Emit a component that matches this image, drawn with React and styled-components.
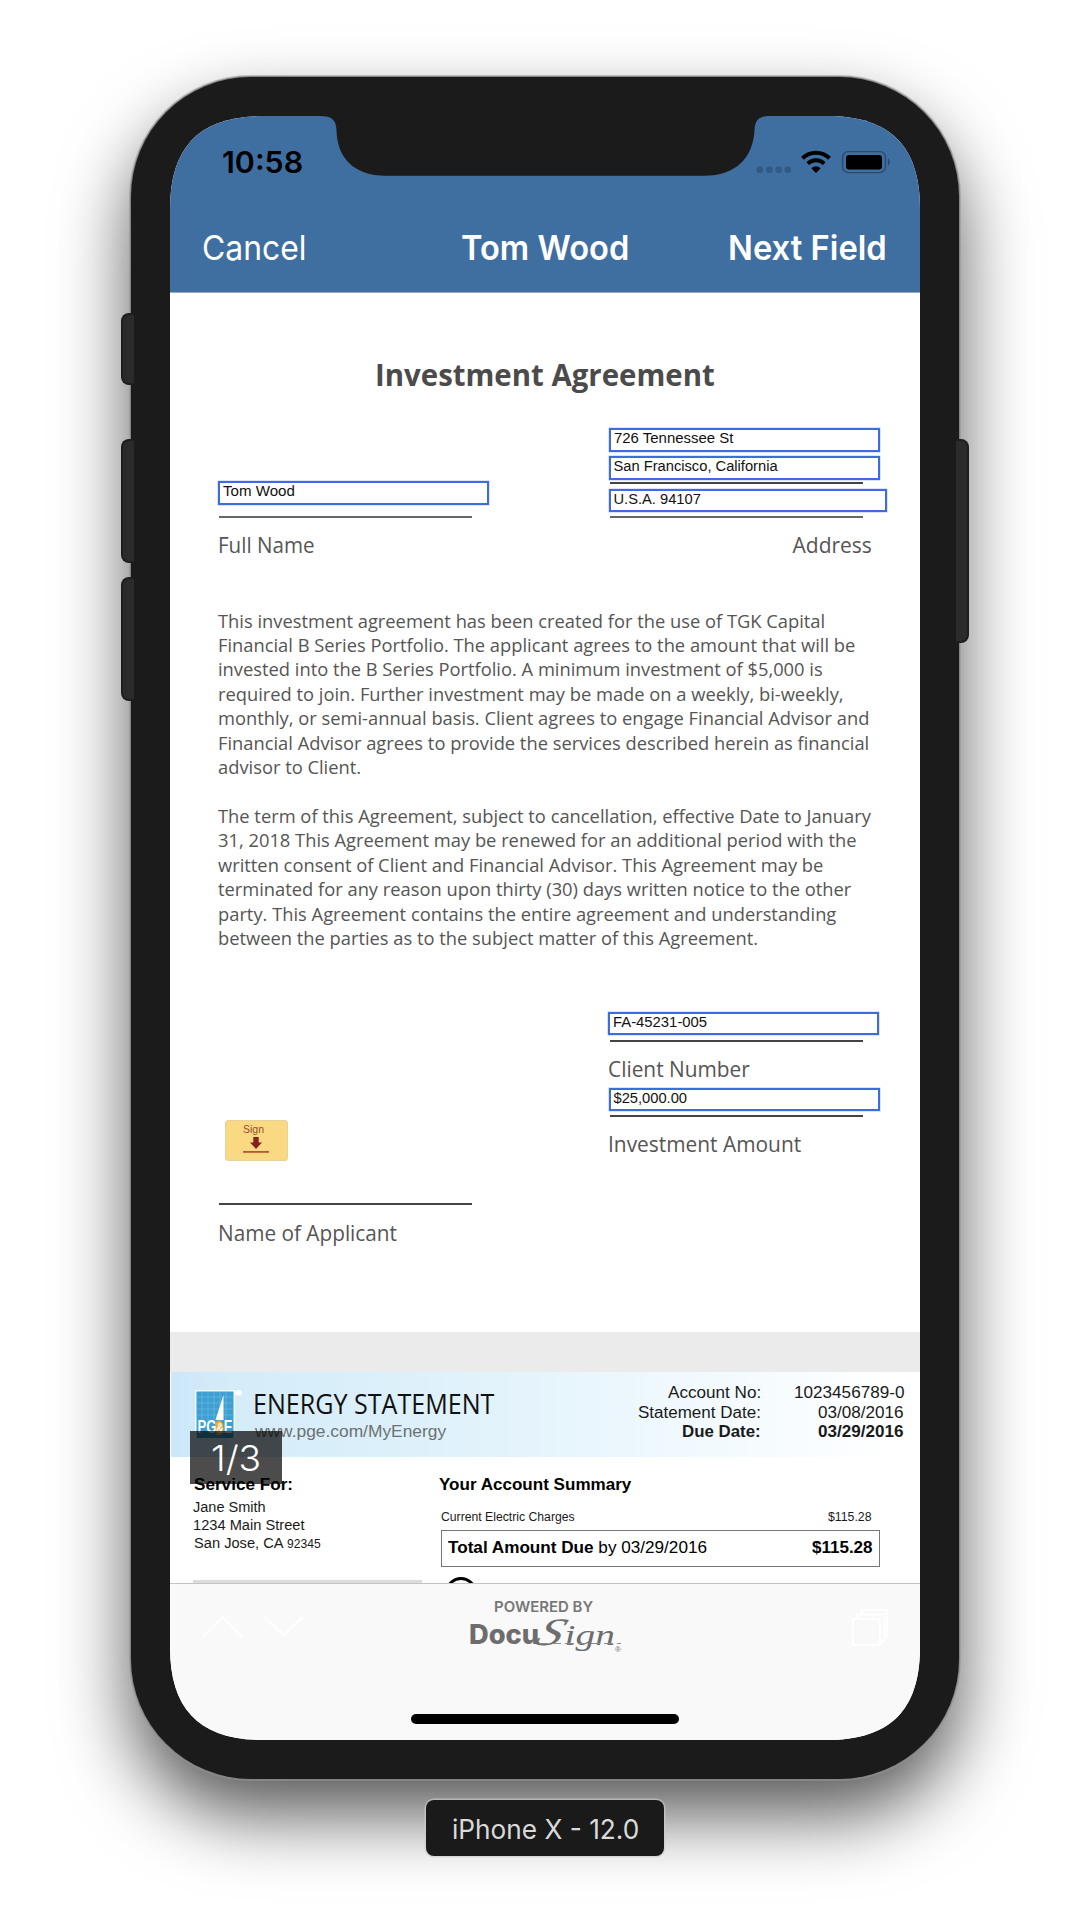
import React, { useLayoutEffect, useRef, useState } from "react";
import styled, { createGlobalStyle } from "styled-components";

const GlobalStyle = createGlobalStyle`
  *, *::before, *::after { box-sizing: border-box; }
  html, body { margin: 0; background: #fff; }
  body { overflow: hidden; }
`;

const ui = `Inter, Roboto, sans-serif`;
const doc = `"Open Sans", "Noto Sans", sans-serif`;
const arial = `"Liberation Sans", Arial, sans-serif`;

/* ---------- text set to a printed width, as in a PDF text layer ---------- */

const RunBox = styled.span`
  display: block;
  flex: none;
  width: ${(p) => p.$w}px;
  white-space: nowrap;
`;

const RunInner = styled.span`
  display: inline-block;
  transform-origin: 0 50%;
`;

function Run({ w, children }) {
  const ref = useRef(null);
  const [scale, setScale] = useState(1);
  useLayoutEffect(() => {
    setScale(w / ref.current.offsetWidth);
  }, [w]);
  return (
    <RunBox $w={w}>
      <RunInner ref={ref} style={{ transform: `scaleX(${scale})` }}>
        {children}
      </RunInner>
    </RunBox>
  );
}

/* ---------- device ---------- */

const Stage = styled.main`
  width: 1090px;
  height: 1928px;
  padding-top: 77px;
  display: flex;
  flex-direction: column;
  align-items: center;
  gap: 21px;
  overflow: hidden;
`;

const Phone = styled.div`
  position: relative;
  width: 828px;
  height: 1702px;
  padding: 39px;
  border-radius: 120px;
  background: #1b1b1b;
  box-shadow: 0 0 0 1px #858585, 0 0 0 2px rgba(150, 150, 150, 0.55),
    0 36px 72px rgba(0, 0, 0, 0.66);
`;

const SideKey = styled.i`
  position: absolute;
  top: ${(p) => p.$top}px;
  ${(p) => p.$side}: -10px;
  width: 13px;
  height: ${(p) => p.$h}px;
  background: #2b2b2b;
  border: 2px solid #1e1e1e;
  border-${(p) => (p.$side === "left" ? "right" : "left")}: 0;
  border-radius: ${(p) => (p.$side === "left" ? "8px 0 0 8px" : "0 8px 8px 0")};
`;

const Screen = styled.div`
  position: relative;
  width: 750px;
  height: 1624px;
  display: flex;
  flex-direction: column;
  background: #fff;
  clip-path: path(
    "M0 93C0 30 30 0 93 0H657C720 0 750 30 750 93V1531C750 1594 720 1624 657 1624H93C30 1624 0 1594 0 1531Z"
  );
`;

const Notch = styled.svg`
  position: absolute;
  top: 0;
  left: 150px;
`;

const Caption = styled.div`
  position: relative;
  width: 238px;
  height: 56px;
  display: flex;
  justify-content: center;
  border-radius: 8px;
  background: #1a1a1a;
  box-shadow: 0 0 0 1.5px rgba(205, 205, 205, 0.65);
  color: #dadada;
  font: 400 26.5px/59px ${ui};
`;

/* ---------- bars ---------- */

const StatusBar = styled.div`
  height: 88px;
  flex: none;
  padding: 0 30px 0 52px;
  display: flex;
  align-items: flex-start;
  justify-content: space-between;
  background: #3f6ea0;
  color: #000;
  font: 600 30px/36px ${ui};
`;

const Clock = styled.div`
  margin-top: 28px;
`;

const Indicators = styled.svg`
  margin-top: 32px;
`;

const NavBar = styled.nav`
  height: 89px;
  flex: none;
  display: flex;
  align-items: flex-start;
  padding: 24px 33px 0 32px;
  background: #3f6ea0;
  border-bottom: 1px solid #9aaabb;
  color: #fff;
  font: 400 34px/40px ${ui};
`;

const NavTitle = styled.div`
  margin-left: 154px;
  font-weight: 600;
`;

const NavAction = styled.div`
  margin-left: auto;
  font-weight: 600;
`;

/* ---------- agreement ---------- */

const Viewport = styled.div`
  height: 1290px;
  flex: none;
  overflow: hidden;
  background: #ebebeb;
`;

const Agreement = styled.article`
  height: 1039px;
  padding: 62px 0 0 48px;
  background: #fff;
  color: #555;
  font-family: ${doc};
`;

const Heading = styled.h1`
  display: flex;
  justify-content: center;
  margin: 0 48px 0 0;
  color: #4b4b4b;
  font: 700 30px/40px ${doc};
`;

const Columns = styled.div`
  display: grid;
  grid-template-columns: 390.5px 1fr;
  height: ${(p) => p.$h}px;
  margin-top: ${(p) => p.$mt || 0}px;
`;

const Column = styled.div`
  display: flex;
  flex-direction: column;
  align-items: flex-start;
  padding-top: ${(p) => p.$pt}px;
`;

const Field = styled.div`
  width: ${(p) => p.$w || 271}px;
  height: 23.5px;
  margin-left: ${(p) => p.$ml || 0}px;
  margin-top: ${(p) => p.$mt || 0}px;
  padding-left: 3px;
  border: 2px solid #3c6ce0;
  box-shadow: 0 0 0 0.5px #b9c9f3;
  color: #111;
  font: 400 14.7px/17px ${arial};
`;

const Rule = styled.hr`
  width: 253px;
  height: 2px;
  margin: ${(p) => p.$mt}px 0 0 1px;
  border: 0;
  background: ${(p) => p.$c || "#444"};
`;

const FieldLabel = styled.div`
  margin-top: ${(p) => p.$mt}px;
  margin-left: ${(p) => p.$ml || 0}px;
  font: 400 21px/28px ${doc};
`;

const Paragraph = styled.p`
  margin: ${(p) => p.$mt}px 0 0;
  font: 400 18.32px/24.43px ${doc};
  white-space: nowrap;
`;

const Line = styled.span`
  display: block;
`;

const SignTag = styled.button`
  width: 63px;
  height: 41px;
  margin-left: 6.5px;
  padding: 1px 0 0 17px;
  display: flex;
  flex-direction: column;
  align-items: flex-start;
  border: 1px solid #e6d29a;
  border-radius: 3px;
  background: #f9da83;
  color: #9a4a2c;
  font: 400 11px/15px ${arial};
`;

/* ---------- energy statement ---------- */

const Statement = styled.article`
  margin-top: 40px;
  height: 260px;
  background: #fff;
  color: #1a1a1a;
  font-family: ${arial};
`;

const Banner = styled.header`
  height: 85px;
  margin-left: 1px;
  display: flex;
  padding: 0 16px 0 23px;
  background: linear-gradient(90deg, #cce6fa 0, #d5ecf9 8%, #daeffa 25%, #e5f4fc 48%, #f2fafe 72%, #fff 97%);
`;

const UtilityLogo = styled.svg`
  flex: none;
  margin: 18px 0 0 1px;
`;

const BannerText = styled.div`
  margin: 0 auto 0 10px;
`;

const StatementTitle = styled.div`
  margin-top: 13.5px;
  color: #111;
  font: 400 28px/34px ${doc};
`;

const Site = styled.div`
  margin: 0 0 0 2px;
  color: #6c7174;
  font: 400 17.2px/23px ${arial};
`;

const Facts = styled.dl`
  display: grid;
  grid-template-columns: 123px 143px;
  grid-auto-rows: 19.6px;
  justify-items: end;
  margin: 10px 0 0;
  font: 400 17.3px/20px ${arial};
`;

const Fact = styled.dd`
  margin: 0;
  font-weight: ${(p) => (p.$b ? 700 : 400)};
`;

const Body = styled.div`
  display: grid;
  grid-template-columns: 246px 440px;
  padding-left: 23px;
`;

const Customer = styled.div`
  padding-top: 16px;
  font: 400 15.3px/18px ${arial};
`;

const Strong = styled.div`
  height: 24px;
  margin-left: ${(p) => p.$ml || 0}px;
  color: #000;
  font: 700 16.8px/24px ${arial};
`;

const AddressLine = styled.div`
  height: 18px;
  margin-top: ${(p) => p.$mt || 0}px;
  margin-left: ${(p) => p.$ml || 0}px;
  display: flex;
  gap: 3px;
`;

const Zip = styled.div`
  font-size: 12.8px;
  line-height: 19px;
`;

const GreyBar = styled.div`
  width: 229px;
  height: 12px;
  margin-top: 28px;
  background: #dcdcdc;
`;

const Summary = styled.div`
  padding-top: 16px;
`;

const ChargeRow = styled.div`
  display: flex;
  justify-content: space-between;
  margin: 12px 7px 0 2px;
  font: 400 12.3px/16px ${arial};
`;

const TotalRow = styled.div`
  width: 439px;
  height: 37px;
  margin: 5px 0 0 2px;
  padding: 0 6px;
  display: flex;
  justify-content: space-between;
  border: 1px solid #777;
  color: #000;
  font: 400 17px/34px ${arial};
`;

const Ring = styled.div`
  width: 32px;
  height: 32px;
  margin: 10px 0 0 6px;
  border: 3px solid #000;
  border-radius: 50%;
`;

const PageBadge = styled.div`
  position: absolute;
  left: 20px;
  top: 1315px;
  width: 92px;
  height: 53px;
  display: flex;
  justify-content: center;
  background: rgba(0, 0, 0, 0.7);
  color: #fff;
  font: 300 35px/55px ${ui};
`;

/* ---------- toolbar ---------- */

const Toolbar = styled.footer`
  flex: 1;
  display: flex;
  flex-direction: column;
  background: #f9f9f9;
  border-top: 1px solid #c4c4c4;
`;

const ToolRow = styled.div`
  height: 70px;
  display: flex;
  padding: 0 32px 0 33px;
`;

const Arrows = styled.svg`
  margin-top: 31px;
`;

const Stack = styled.svg`
  margin-top: 25px;
`;

const Brand = styled.div`
  width: 156px;
  margin: 0 auto 0 164px;
  color: #6d6d6d;
`;

const Powered = styled.div`
  margin: 14px 0 0 25px;
  color: #777;
  font: 600 14.8px/18px ${ui};
`;

const Wordmark = styled.div`
  display: flex;
  height: 38px;
`;

const Docu = styled.div`
  margin-top: 1px;
  font: 800 26.5px/34px ${ui};
`;

const Script = styled.div`
  position: relative;
  width: 78px;
  font: italic 400 30px/38px "Liberation Serif", serif;

  &::after {
    content: "";
    position: absolute;
    left: 0;
    top: 27px;
    width: 82px;
    height: 1px;
    background: repeating-linear-gradient(90deg, #8a8a8a 0 9px, transparent 9px 13px);
  }
`;

const Initial = styled.span`
  display: inline-block;
  font-size: 39px;
  line-height: 30px;
  transform: skewX(-18deg);
`;

const Registered = styled.span`
  position: absolute;
  left: 76px;
  top: 28px;
  font: 400 8px/12px ${arial};
`;

const HomeIndicator = styled.div`
  width: 268px;
  height: 10px;
  margin: 60px auto 0;
  border-radius: 5px;
  background: #000;
`;

const TERMS = [
  [
    "This investment agreement has been created for the use of TGK Capital",
    "Financial B Series Portfolio. The applicant agrees to the amount that will be",
    "invested into the B Series Portfolio. A minimum investment of $5,000 is",
    "required to join. Further investment may be made on a weekly, bi-weekly,",
    "monthly, or semi-annual basis. Client agrees to engage Financial Advisor and",
    "Financial Advisor agrees to provide the services described herein as financial",
    "advisor to Client.",
  ],
  [
    "The term of this Agreement, subject to cancellation, effective Date to January",
    "31, 2018 This Agreement may be renewed for an additional period with the",
    "written consent of Client and Financial Advisor. This Agreement may be",
    "terminated for any reason upon thirty (30) days written notice to the other",
    "party. This Agreement contains the entire agreement and understanding",
    "between the parties as to the subject matter of this Agreement.",
  ],
];

const FACTS = [
  ["Account No:", 93, "1023456789-0", 110],
  ["Statement Date:", 123, "03/08/2016", 86],
  ["Due Date:", 79, "03/29/2016", 86, true],
];

export default function App() {
  return (
    <Stage>
      <GlobalStyle />
      <Phone>
        <SideKey $side="left" $top={236} $h={72} />
        <SideKey $side="left" $top={362} $h={124} />
        <SideKey $side="left" $top={500} $h={124} />
        <SideKey $side="right" $top={362} $h={204} />
        <Screen>
          <StatusBar>
            <Clock>
              <Run w={81}>10:58</Run>
            </Clock>
            <Indicators width="136" height="28" viewBox="0 0 136 28">
              <g fill="#335a84">
                <rect x="2.5" y="18.5" width="6.5" height="6.5" rx="2.4" />
                <rect x="12" y="18.5" width="6.5" height="6.5" rx="2.4" />
                <rect x="21.5" y="18.5" width="6.5" height="6.5" rx="2.4" />
                <rect x="30.5" y="18.5" width="6.5" height="6.5" rx="2.4" />
              </g>
              <g fill="none" stroke="#000" strokeWidth="4">
                <path d="M48.5 10.2a19.3 19.3 0 0 1 27 0" />
                <path d="M53.8 15.6a11.8 11.8 0 0 1 16.4 0" />
              </g>
              <path d="M57.3 20.2a6.8 6.8 0 0 1 9.4 0L62 25Z" fill="#000" />
              <rect x="88.6" y="3.6" width="42.8" height="21" rx="5.5" fill="none" stroke="#2b4b6e" strokeWidth="1.4" />
              <rect x="92" y="7" width="36" height="14.5" rx="3" fill="#000" />
              <path d="M133.8 10.3c2.6 1.2 2.6 6.2 0 7.4Z" fill="#2b4b6e" />
            </Indicators>
          </StatusBar>
          <NavBar>
            <Run w={105}>Cancel</Run>
            <NavTitle>
              <Run w={168}>Tom Wood</Run>
            </NavTitle>
            <NavAction>
              <Run w={159}>Next Field</Run>
            </NavAction>
          </NavBar>

          <Viewport>
            <Agreement>
              <Heading>
                <Run w={340}>Investment Agreement</Run>
              </Heading>
              <Columns $h={165}>
                <Column $pt={86}>
                  <Field>
                    <Run w={72}>Tom Wood</Run>
                  </Field>
                  <Rule $mt={11.5} $c="#666" />
                  <FieldLabel $mt={13}>
                    <Run w={97}>Full Name</Run>
                  </FieldLabel>
                </Column>
                <Column $pt={33}>
                  <Field>
                    <Run w={119}>726 Tennessee St</Run>
                  </Field>
                  <Field $mt={4.5}>
                    <Run w={164}>San Francisco, California</Run>
                  </Field>
                  <Rule $mt={2.5} />
                  <Field $mt={4.5} $w={278}>
                    <Run w={87}>U.S.A. 94107</Run>
                  </Field>
                  <Rule $mt={4} $c="#666" />
                  <FieldLabel $mt={13} $ml={184}>
                    <Run w={79}>Address</Run>
                  </FieldLabel>
                </Column>
              </Columns>

              {TERMS.map((lines, i) => (
                <Paragraph key={i} $mt={i ? 24.43 : 48.5}>
                  {lines.map((line) => (
                    <Line key={line}>{line}</Line>
                  ))}
                </Paragraph>
              ))}

              <Columns $h={240} $mt={61.1}>
                <Column $pt={108}>
                  <SignTag>
                    <Run w={21}>Sign</Run>
                    <svg width="27" height="20" viewBox="0 0 27 20">
                      <path d="M10.3 0h5.4v5.5H19L13 12 7 5.5h3.3Z" fill="#86201f" />
                      <rect x="0" y="14" width="26" height="1.8" fill="#b5563a" />
                    </svg>
                  </SignTag>
                  <Rule $mt={42.5} />
                  <FieldLabel $mt={13.5}>
                    <Run w={179}>Name of Applicant</Run>
                  </FieldLabel>
                </Column>
                <Column $pt={0}>
                  <Field $ml={-1}>
                    <Run w={94}>FA-45231-005</Run>
                  </Field>
                  <Rule $mt={4.5} />
                  <FieldLabel $mt={13} $ml={-1}>
                    <Run w={142}>Client Number</Run>
                  </FieldLabel>
                  <Field $mt={5}>
                    <Run w={74}>$25,000.00</Run>
                  </Field>
                  <Rule $mt={3.5} />
                  <FieldLabel $mt={13} $ml={-1}>
                    <Run w={193}>Investment Amount</Run>
                  </FieldLabel>
                </Column>
              </Columns>
            </Agreement>

            <Statement>
              <Banner>
                <UtilityLogo width="48" height="48" viewBox="0 0 48 48">
                  <rect x="0" y="0" width="40" height="48" fill="#f2fafd" />
                  <rect x="1.5" y="1.5" width="37" height="46.5" fill="#3e9fd3" />
                  <path d="M1.5 7h37M1.5 13h37M1.5 19h37M1.5 25h37M7 1.5v30M13 1.5v30M19 1.5v30M25 1.5v30M31 1.5v30" stroke="#62b6de" strokeWidth="0.8" />
                  <path d="M28.5 5v25h-8Z" fill="#fff" />
                  <ellipse cx="24" cy="38" rx="4.5" ry="7.5" fill="#eda92f" />
                  <ellipse cx="43.5" cy="2.8" rx="3.5" ry="2.8" fill="#fff" />
                  <text x="2.500" y="43" fill="#fff" fontFamily="Liberation Sans, sans-serif" fontWeight="700" fontSize="19" textLength="35" lengthAdjust="spacingAndGlyphs">
                    PG<tspan fontSize="15">&amp;</tspan>E
                  </text>
                </UtilityLogo>
                <BannerText>
                  <StatementTitle>
                    <Run w={241}>ENERGY STATEMENT</Run>
                  </StatementTitle>
                  <Site>
                    <Run w={191}>www.pge.com/MyEnergy</Run>
                  </Site>
                </BannerText>
                <Facts>
                  {FACTS.map(([name, nameW, value, valueW, bold]) => (
                    <React.Fragment key={name}>
                      <Fact as="dt" $b={bold}>
                        <Run w={nameW}>{name}</Run>
                      </Fact>
                      <Fact $b={bold}>
                        <Run w={valueW}>{value}</Run>
                      </Fact>
                    </React.Fragment>
                  ))}
                </Facts>
              </Banner>
              <Body>
                <Customer>
                  <Strong $ml={1}>
                    <Run w={99}>Service For:</Run>
                  </Strong>
                  <AddressLine $mt={1}>
                    <Run w={73}>Jane Smith</Run>
                  </AddressLine>
                  <AddressLine>
                    <Run w={112}>1234 Main Street</Run>
                  </AddressLine>
                  <AddressLine $ml={1}>
                    <Run w={90}>San Jose, CA</Run>
                    <Zip>
                      <Run w={34}>92345</Run>
                    </Zip>
                  </AddressLine>
                  <GreyBar />
                </Customer>
                <Summary>
                  <Strong>
                    <Run w={192}>Your Account Summary</Run>
                  </Strong>
                  <ChargeRow>
                    <Run w={134}>Current Electric Charges</Run>
                    <Run w={44}>$115.28</Run>
                  </ChargeRow>
                  <TotalRow>
                    <Run w={259}>
                      <b>Total Amount Due</b> by 03/29/2016
                    </Run>
                    <Run w={61}>
                      <b>$115.28</b>
                    </Run>
                  </TotalRow>
                  <Ring />
                </Summary>
              </Body>
            </Statement>
          </Viewport>

          <Toolbar>
            <ToolRow>
              <Arrows width="102" height="26" viewBox="0 0 102 26" fill="none" stroke="#fff" strokeWidth="2.4">
                <path d="M0 22L19.500 2L39 22M61 2L80.500 20L100 2" />
              </Arrows>
              <Brand>
                <Powered>
                  <Run w={99}>POWERED BY</Run>
                </Powered>
                <Wordmark>
                  <Docu>
                    <Run w={70}>Docu</Run>
                  </Docu>
                  <Script>
                    <Run w={76}>
                      <Initial>S</Initial>ign
                    </Run>
                    <Registered>®</Registered>
                  </Script>
                </Wordmark>
              </Brand>
              <Stack width="36" height="38" viewBox="0 0 36 38" fill="none" stroke="#fff" strokeWidth="2">
                <rect x="1" y="10" width="27" height="26" />
                <path d="M5 10V5.500H32V32H28M9.500 5.500V1H35V28H32" />
              </Stack>
            </ToolRow>
            <HomeIndicator />
          </Toolbar>

          <PageBadge>
            <Run w={50}>1/3</Run>
          </PageBadge>
          <Notch width="450" height="60" viewBox="0 0 450 60">
            <path d="M0 0C12 0 16 4 16.500 14C17 42 34 59.700 66 59.700H384C416 59.700 433 42 434.500 14C435 4 439 0 450 0Z" fill="#1b1b1b" />
          </Notch>
        </Screen>
      </Phone>
      <Caption>
        <Run w={187}>iPhone X - 12.0</Run>
      </Caption>
    </Stage>
  );
}
